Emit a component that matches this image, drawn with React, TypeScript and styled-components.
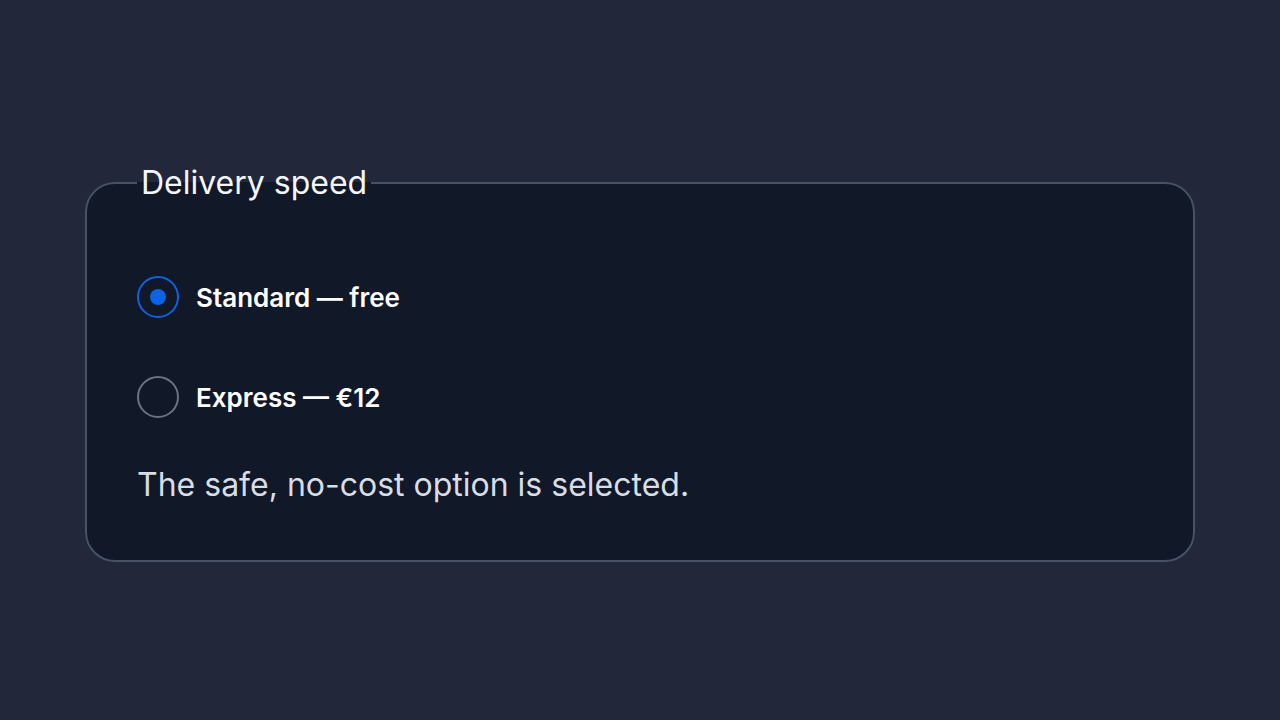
import React, { useState } from "react";
import styled, { createGlobalStyle } from "styled-components";

const GlobalStyle = createGlobalStyle`
  html, body {
    margin: 0;
    padding: 0;
    background: #22283a;
    font-family: Inter, "Noto Sans", "Liberation Sans", sans-serif;
  }
`;

const options = [
  { id: "standard", label: "Standard — free" },
  { id: "express", label: "Express — €12" },
];

const App = () => {
  const [speed, setSpeed] = useState("standard");

  return (
    <Page>
      <GlobalStyle />
      <Fieldset>
        <Legend>Delivery speed</Legend>
        <OptionList>
          {options.map((o) => (
            <Option key={o.id}>
              <Radio
                type="radio"
                name="speed"
                checked={speed === o.id}
                onChange={() => setSpeed(o.id)}
              />
              <OptionLabel>{o.label}</OptionLabel>
            </Option>
          ))}
        </OptionList>
        <Hint>
          {speed === "standard"
            ? "The safe, no-cost option is selected."
            : "Express delivery costs €12."}
        </Hint>
      </Fieldset>
    </Page>
  );
};

const Page = styled.div`
  width: 1280px;
  height: 720px;
  box-sizing: border-box;
  padding: 165px 85px 0;
`;

const Fieldset = styled.fieldset`
  margin: 0;
  box-sizing: border-box;
  width: 1110px;
  height: 397px;
  padding: 75px 50px 0;
  border: 2px solid #465266;
  border-radius: 30px;
  background: #111827;
`;

const Legend = styled.legend`
  padding: 0 4px;
  font-size: 32px;
  line-height: 36px;
  color: #f3f6fb;
`;

const OptionList = styled.div`
  display: flex;
  flex-direction: column;
  gap: 58px;
`;

const Option = styled.label`
  display: flex;
  align-items: center;
  gap: 17px;
  cursor: pointer;
`;

const Radio = styled.input`
  appearance: none;
  margin: 0;
  width: 42px;
  height: 42px;
  border-radius: 50%;
  border: 2px solid #6b7280;
  display: grid;
  place-items: center;
  cursor: pointer;

  &::after {
    content: "";
    width: 16px;
    height: 16px;
    border-radius: 50%;
    background: transparent;
  }

  &:checked {
    border-color: #0b63e5;
  }

  &:checked::after {
    background: #0b63e5;
  }
`;

const OptionLabel = styled.span`
  font-size: 26px;
  font-weight: 600;
  color: #ffffff;
`;

const Hint = styled.p`
  margin: 47px 0 0;
  font-size: 32px;
  color: #d8dde6;
`;

export default App;
